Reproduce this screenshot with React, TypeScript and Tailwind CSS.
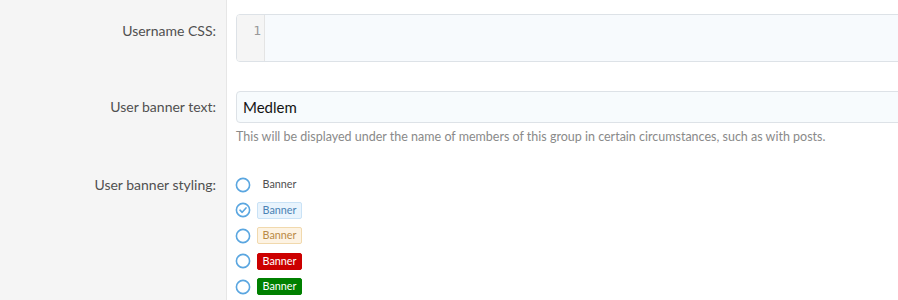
import React from "react";

const font = { fontFamily: 'Lato, "Noto Sans", sans-serif' };

function Radio({ checked }: { checked?: boolean }) {
  return (
    <svg width="16" height="16" viewBox="0 0 16 16" className="shrink-0">
      <circle cx="8" cy="8" r="6.6" fill="white" stroke="#5aa6e0" strokeWidth="1.6" />
      {checked && (
        <path d="M5 8.2 L7.2 10.3 L11 5.9" fill="none" stroke="#5aa6e0" strokeWidth="1.6" strokeLinecap="round" strokeLinejoin="round" />
      )}
    </svg>
  );
}

function Row({ label, children, labelClass, grow }: { label: string; children: React.ReactNode; labelClass: string; grow?: boolean }) {
  return (
    <div className={"flex" + (grow ? " flex-1" : "")}>
      <div className={"w-[227px] shrink-0 bg-[#f5f5f5] border-r border-[#e6e6e6] pr-[10px] text-right text-[14px] leading-[20px] text-[#505050] " + labelClass}>
        {label}
      </div>
      <div className="flex-1 min-w-0 pl-[9px]">{children}</div>
    </div>
  );
}

export default function App() {
  const banners = [
    { cls: "text-[#505050] border-transparent bg-transparent", checked: false },
    { cls: "text-[#4a82b4] bg-[#e9f4fd] border-[#c9e2f6]", checked: true },
    { cls: "text-[#b98a45] bg-[#fdf3e3] border-[#f1d9ad]", checked: false },
    { cls: "text-white bg-[#cc0000] border-[#cc0000]", checked: false },
    { cls: "text-white bg-[#008000] border-[#008000]", checked: false },
  ];
  return (
    <div className="w-[898px] h-[300px] overflow-hidden bg-white flex flex-col" style={font}>
      <Row label="Username CSS:" labelClass="pt-[21px]">
        <div className="pt-[14px] pb-[14px]">
          <div className="w-[700px] h-[48px] flex rounded-[4px] border border-[#dde2e7] overflow-hidden">
            <div className="w-[28px] bg-[#f5f5f5] border-r border-[#e4e4e4] text-right pr-[3px] pt-[6px] text-[13px] text-[#999]" style={{ fontFamily: '"DejaVu Sans Mono", monospace' }}>
              1
            </div>
            <div className="flex-1 bg-[#f7fafd]" />
          </div>
        </div>
      </Row>
      <Row label="User banner text:" labelClass="pt-[21px]">
        <div className="pt-[15px]">
          <div className="w-[700px] h-[32px] rounded-[4px] border border-[#dde2e7] bg-[#f7fbfd] flex items-center pl-[6px] text-[15px] text-[#141414]">
            Medlem
          </div>
          <div className="text-[12.5px] text-[#8a8a8a] mt-[5px] leading-[18px] whitespace-nowrap">
            This will be displayed under the name of members of this group in certain circumstances, such as with posts.
          </div>
        </div>
      </Row>
      <Row label="User banner styling:" labelClass="pt-[29px]" grow>
        <div className="pt-[30px] flex flex-col gap-[8.5px]">
          {banners.map((b, i) => (
            <div key={i} className="flex items-center h-[17px]">
              <div className="w-[16px] ml-[-1px]"><Radio checked={b.checked} /></div>
              <div className="w-[6px]" />
              <span className={"inline-flex items-center justify-center h-[17px] w-[45px] rounded-[2px] border text-[10.8px] " + b.cls}>
                Banner
              </span>
            </div>
          ))}
        </div>
      </Row>
    </div>
  );
}
